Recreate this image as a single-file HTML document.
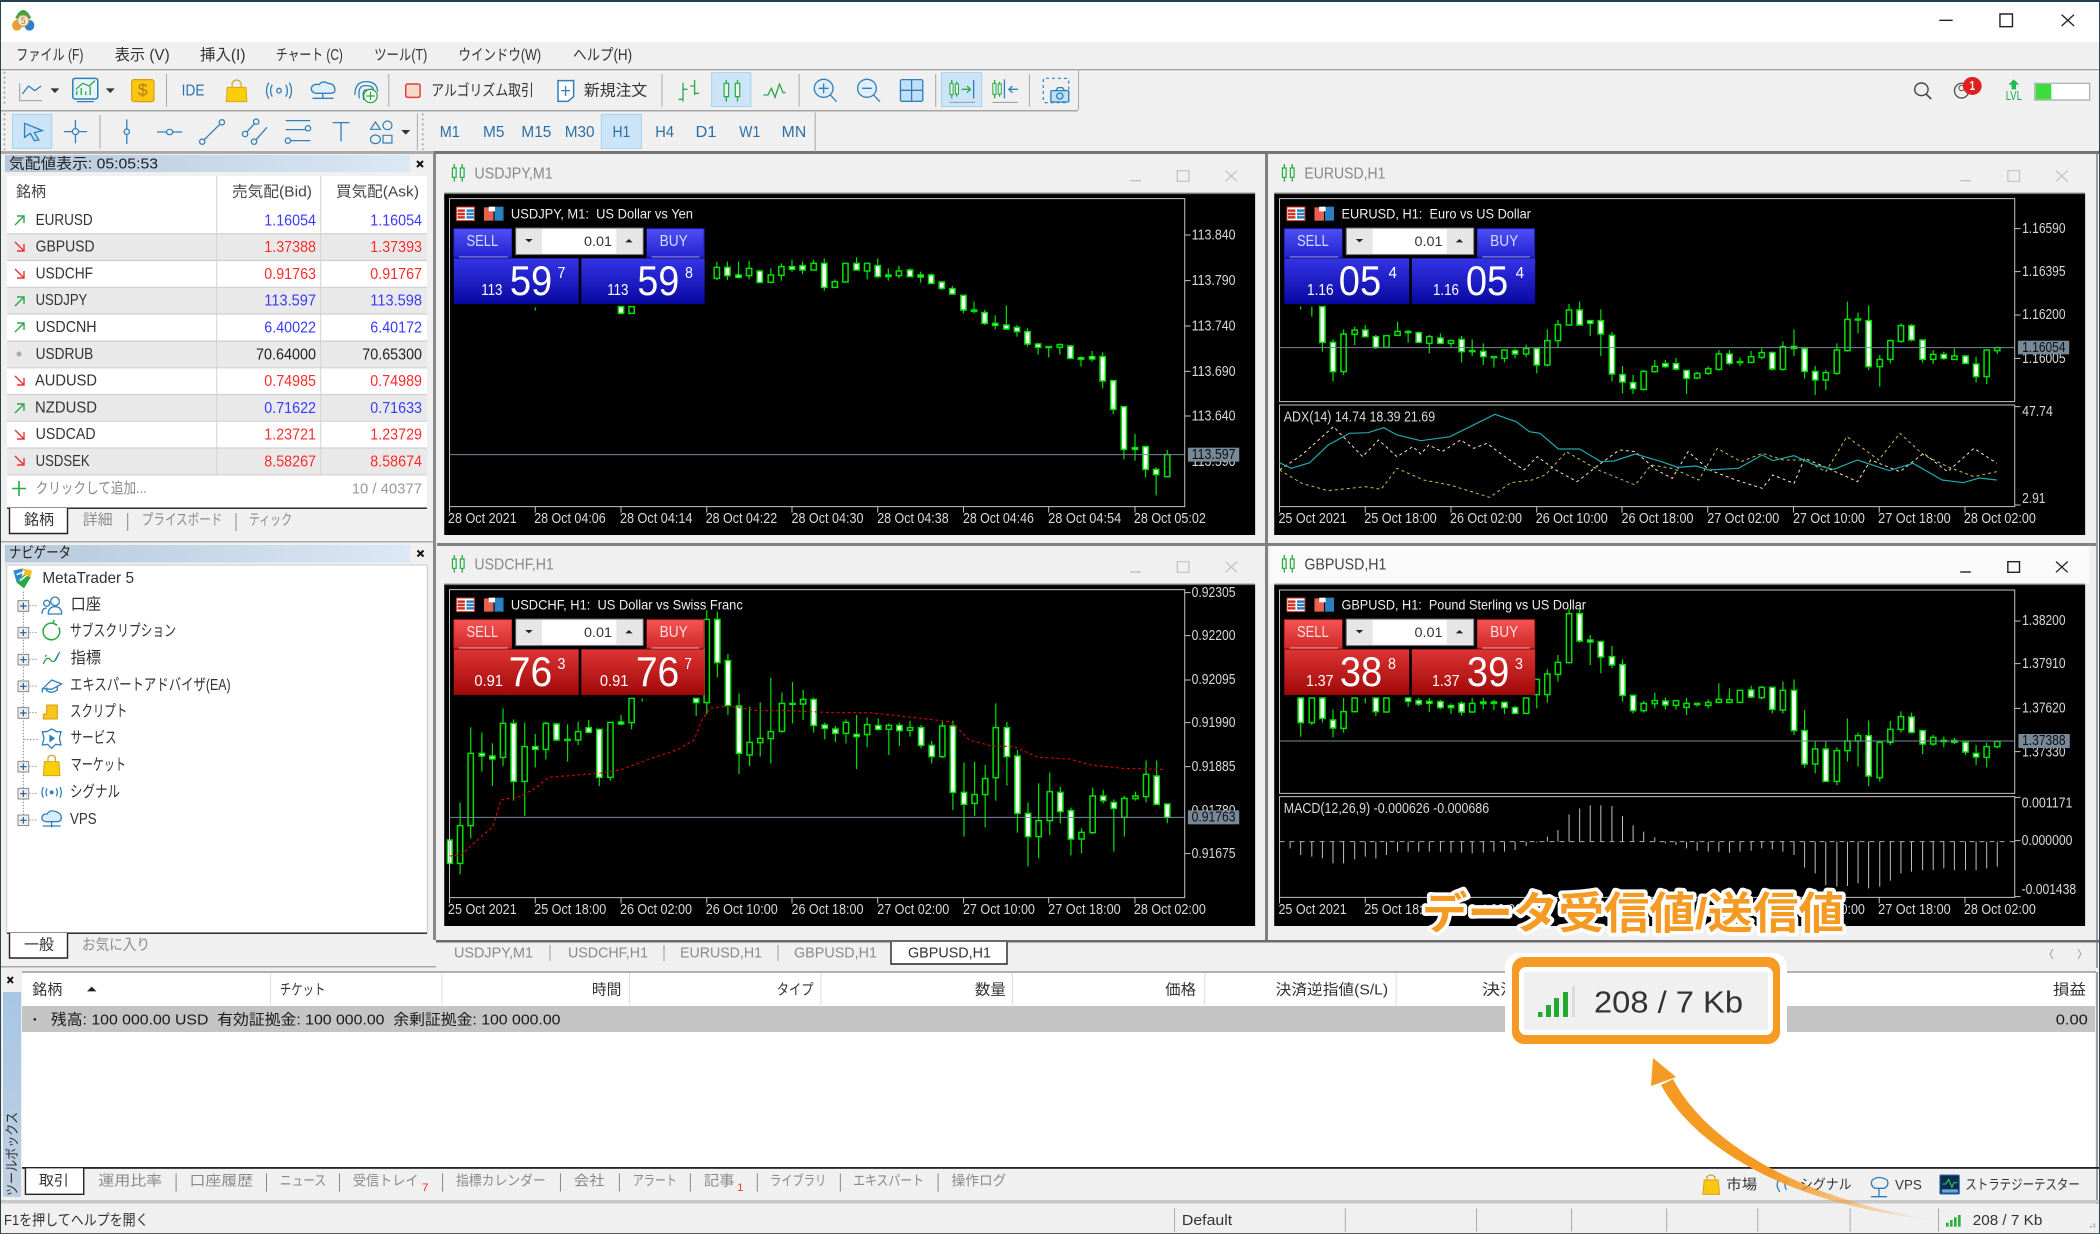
<!DOCTYPE html>
<html lang="ja"><head><meta charset="utf-8"><title>MetaTrader 5</title>
<style>
html,body{margin:0;padding:0;background:#f0f0f0;width:2100px;height:1234px;overflow:hidden}
svg{position:absolute;left:0;top:0;display:block;filter:blur(.35px)}
text{font-family:"Liberation Sans","Noto Sans CJK JP",sans-serif;dominant-baseline:central;white-space:pre}
path,rect,line,circle,ellipse,polyline{vector-effect:non-scaling-stroke}
.b{fill:none;stroke:#2f7fb8;stroke-width:1.3}
.g{fill:none;stroke:#2aa845;stroke-width:1.3}
.w{fill:none;stroke:#00e000;stroke-width:1.2}
.cw{fill:#fff;stroke:#00e000;stroke-width:1.5}
.ch{fill:#000;stroke:#00e000;stroke-width:1.5}
.fr{fill:none;stroke:#c4c4c4;stroke-width:1}
.lb{fill:#d8d8d8}
.sp{stroke:#a8a8a8;stroke-width:1;fill:none}
</style></head><body>
<svg width="2100" height="1234" viewBox="0 0 2100 1234" xmlns="http://www.w3.org/2000/svg">
<defs>
<linearGradient id="bt" x1="0" y1="0" x2="0" y2="1"><stop offset="0" stop-color="#5050f5"/><stop offset="1" stop-color="#2222d0"/></linearGradient>
<linearGradient id="bb" x1="0" y1="0" x2="0" y2="1"><stop offset="0" stop-color="#3434e8"/><stop offset="1" stop-color="#0808a0"/></linearGradient>
<linearGradient id="rt" x1="0" y1="0" x2="0" y2="1"><stop offset="0" stop-color="#f55555"/><stop offset="1" stop-color="#d02828"/></linearGradient>
<linearGradient id="rb" x1="0" y1="0" x2="0" y2="1"><stop offset="0" stop-color="#de3434"/><stop offset="1" stop-color="#a00808"/></linearGradient>
<linearGradient id="tg" x1="0" y1="0" x2="1" y2="0"><stop offset="0" stop-color="#b6c8da"/><stop offset="1" stop-color="#dbe8f5"/></linearGradient>
<linearGradient id="vg" x1="0" y1="0" x2="0" y2="1"><stop offset="0" stop-color="#a6c6e6"/><stop offset="1" stop-color="#c0d0e0"/></linearGradient>
<linearGradient id="ar" gradientUnits="userSpaceOnUse" x1="1770" y1="1170" x2="1934" y2="1220"><stop offset="0" stop-color="#f59a23"/><stop offset="1" stop-color="#f59a23" stop-opacity="0"/></linearGradient>
<g id="lot"><rect x="136" y="228" width="254" height="96" fill="#000"/><rect x="143" y="234" width="241" height="80" fill="#e6e6e6" stroke="#666" stroke-width="1"/><rect x="193" y="237" width="140" height="74" fill="#fff"/><path d="M161 267h14l-7 10zM350 277h14l-7-10z" fill="#222"/><text x="272" y="274" font-size="42" fill="#333" textLength="53" lengthAdjust="spacingAndGlyphs">0.01</text></g>
<g id="pi"><rect x="31" y="171" width="34" height="41" fill="#fff" stroke="#d03020" stroke-width="1"/><path d="M33 182H47M33 192H47M33 202H47" stroke="#d83020" stroke-width="2.5"/><path d="M50 182H64M50 192H64M50 202H64" stroke="#2a80c0" stroke-width="2.5"/><rect x="83" y="172" width="18" height="40" fill="#e86050"/><rect x="103" y="170" width="17" height="42" fill="#2a80c0"/><rect x="92" y="170" width="12" height="14" fill="#fff"/></g>
<g id="pb"><rect x="26" y="236" width="110" height="86" fill="url(#bt)" stroke="#1a1ab0"/><path d="M36 321H128" stroke="#9a9aff" stroke-width="1"/><text x="50" y="275" font-size="46" fill="#d4dcff" textLength="60" lengthAdjust="spacingAndGlyphs">SELL</text><rect x="390" y="236" width="109" height="86" fill="url(#bt)" stroke="#1a1ab0"/><path d="M400 321H490" stroke="#9a9aff" stroke-width="1"/><text x="415" y="275" font-size="46" fill="#d4dcff" textLength="53" lengthAdjust="spacingAndGlyphs">BUY</text><rect x="26" y="325" width="236" height="137" fill="url(#bb)"/><rect x="267" y="325" width="233" height="137" fill="url(#bb)"/><use href="#lot"/></g>
<g id="pr"><rect x="26" y="236" width="110" height="86" fill="url(#rt)" stroke="#b01a1a"/><path d="M36 321H128" stroke="#ffaaaa" stroke-width="1"/><text x="50" y="275" font-size="46" fill="#ffe0e0" textLength="60" lengthAdjust="spacingAndGlyphs">SELL</text><rect x="390" y="236" width="109" height="86" fill="url(#rt)" stroke="#b01a1a"/><path d="M400 321H490" stroke="#ffaaaa" stroke-width="1"/><text x="415" y="275" font-size="46" fill="#ffe0e0" textLength="53" lengthAdjust="spacingAndGlyphs">BUY</text><rect x="26" y="325" width="236" height="137" fill="url(#rb)"/><rect x="267" y="325" width="233" height="137" fill="url(#rb)"/><use href="#lot"/></g>
<g id="wi"><path d="M27 42V95M42 42V95" class="g"/><rect x="23.5" y="54" width="7" height="28" fill="#eaf8ea" stroke="#2aa845" stroke-width="1.2"/><rect x="38.5" y="54" width="7" height="28" fill="#eaf8ea" stroke="#2aa845" stroke-width="1.2"/></g>
</defs>

<!-- base -->
<rect width="2100" height="1234" fill="#f0f0f0"/>
<rect width="2100" height="2" fill="#21404f"/>
<rect y="2" width="2100" height="40" fill="#fff"/>
<rect y="69" width="2100" height="1.5" fill="#a5a5a5"/><rect y="70.5" width="2100" height="1" fill="#fff"/>
<rect y="110" width="1078" height="1.5" fill="#a5a5a5"/>
<rect y="151" width="434" height="3" fill="#aaa"/><rect x="434" y="151" width="1666" height="3" fill="#757575"/>

<!-- top: zoom coords left -->
<g transform="scale(.4464 .3333)">
<path d="M34 54Q52 6 70 54Q52 66 34 54Z" fill="#3aa648"/><ellipse cx="38" cy="76" rx="11" ry="16" fill="#e8a030"/><ellipse cx="66" cy="76" rx="11" ry="16" fill="#2a80d0"/><ellipse cx="52" cy="62" rx="13" ry="17" fill="#f0e8d0" stroke="#c89040"/><text x="47" y="62" font-size="30" fill="#b87820" textLength="10" lengthAdjust="spacingAndGlyphs">5</text>
<g font-size="46" fill="#333">
<text x="36" y="165" textLength="151" lengthAdjust="spacingAndGlyphs">ファイル (F)</text>
<text x="257" y="165" textLength="123" lengthAdjust="spacingAndGlyphs">表示 (V)</text>
<text x="448" y="165" textLength="102" lengthAdjust="spacingAndGlyphs">挿入(I)</text>
<text x="618" y="165" textLength="150" lengthAdjust="spacingAndGlyphs">チャート (C)</text>
<text x="838" y="165" textLength="119" lengthAdjust="spacingAndGlyphs">ツール(T)</text>
<text x="1027" y="165" textLength="185" lengthAdjust="spacingAndGlyphs">ウインドウ(W)</text>
<text x="1284" y="165" textLength="132" lengthAdjust="spacingAndGlyphs">ヘルプ(H)</text>
<text x="966" y="272" textLength="230" lengthAdjust="spacingAndGlyphs">アルゴリズム取引</text>
<text x="1308" y="272" textLength="142" lengthAdjust="spacingAndGlyphs">新規注文</text>
</g>
<path d="M10 215V320M10 340V450M947 340V450" stroke="#b0b0b0" stroke-width="2" stroke-dasharray="2 3" fill="none"/>
<path d="M44 250V302H94" fill="none" stroke="#aaa" stroke-width="1.2"/><path d="M50 282L64 258L78 272L92 258" class="b"/><path d="M113 265h20l-10 14zM237 265h20l-10 14zM899 390h20l-10 14z" fill="#333"/>
<rect x="163" y="235" width="56" height="62" rx="6" fill="#e8f4fb" stroke="#2f7fb8" stroke-width="1.5"/><path d="M172 285V272M182 285V264M192 285V274M202 285V260" class="g"/><path d="M170 268L185 250L200 258L213 242" class="g"/><path d="M172 305H210" class="b"/>
<rect x="295" y="239" width="50" height="66" rx="6" fill="#f7c80f" stroke="#e09a10" stroke-width="1.2"/><text x="309" y="272" font-size="50" fill="#b57a10" textLength="22" lengthAdjust="spacingAndGlyphs">$</text>
<path d="M373 222V320M871 222V320M1483 222V320M224 345V445M935 340V450" class="sp"/>
<text x="407" y="272" font-size="46" fill="#2a70b0" textLength="51" lengthAdjust="spacingAndGlyphs">IDE</text>
<path d="M509 262H551L553 305H507Z" fill="#f9cf0a" stroke="#e0a020" stroke-width="1"/><path d="M520 262V248Q530 232 540 248V262" fill="none" stroke="#d8a020" stroke-width="1.2"/>
<ellipse cx="625" cy="272" rx="5" ry="7" class="b"/><path d="M610 254Q602 272 610 290M640 254Q648 272 640 290M602 248Q592 272 602 296M648 248Q658 272 648 296" class="b"/>
<path d="M707 280Q695 275 698 262Q702 250 715 254Q722 240 735 250Q750 252 750 268Q752 280 738 280Z" fill="#e0f0fb" stroke="#2f7fb8" stroke-width="1.3"/><path d="M723 280V295M700 295H747" class="b"/>
<path d="M795 285Q795 245 820 245Q845 245 846 275M805 295Q800 255 820 257Q838 257 836 272M815 300Q810 268 822 270" class="b"/><ellipse cx="830" cy="288" rx="15" ry="20" fill="#fff" stroke="#2aa845" stroke-width="1.3"/><path d="M830 275V300M820 288H840" class="g"/>
<rect x="909" y="252" width="32" height="40" rx="4" fill="#f8d8c8" stroke="#e04040" stroke-width="1.5"/>
<path d="M1250 242H1285V290L1272 304H1250Z" fill="#fff" stroke="#2f7fb8" stroke-width="1.5"/><path d="M1267 258V288M1257 272H1277" class="b"/>
<path d="M1530 248V305M1520 298H1530M1530 268H1540M1556 240V285M1546 258H1556M1556 280H1566" class="g"/>
<!-- row 2 -->
<rect x="28" y="343" width="88" height="102" fill="#cce4f7" stroke="#a6d2f2" stroke-width="1"/>
<path d="M55 370L95 392L77 398L87 420L77 422L68 400L55 412Z" fill="#bfe0f8" stroke="#2f7fb8" stroke-width="1.3"/>
<path d="M143 395H195M169 360V430M284 358V432M352 396H408M453 425L497 367M549 402L574 365M570 425L598 382M640 362H695M640 389H695M640 422H695M745 368H783M764 368V424" class="b"/>
<g fill="#f0f0f0" stroke="#2f7fb8" stroke-width="1.2"><ellipse cx="169" cy="395" rx="7" ry="9"/><ellipse cx="284" cy="395" rx="6" ry="8"/><ellipse cx="380" cy="396" rx="7" ry="8"/><ellipse cx="453" cy="425" rx="6" ry="8"/><ellipse cx="497" cy="367" rx="6" ry="8"/><ellipse cx="549" cy="402" rx="6" ry="8"/><ellipse cx="574" cy="365" rx="6" ry="8"/><ellipse cx="569" cy="425" rx="6" ry="8"/><ellipse cx="690" cy="385" rx="6" ry="8"/><ellipse cx="645" cy="422" rx="6" ry="8"/><path d="M830 388L841 366L852 388Z"/><ellipse cx="868" cy="376" rx="10" ry="13"/><ellipse cx="841" cy="418" rx="11" ry="13"/><rect x="858" y="406" width="20" height="23"/></g>
<g font-size="46" fill="#2a6fa8">
<text x="985" y="396" textLength="45" lengthAdjust="spacingAndGlyphs">M1</text>
<text x="1082" y="396" textLength="48" lengthAdjust="spacingAndGlyphs">M5</text>
<text x="1168" y="396" textLength="67" lengthAdjust="spacingAndGlyphs">M15</text>
<text x="1265" y="396" textLength="67" lengthAdjust="spacingAndGlyphs">M30</text>
<rect x="1347" y="343" width="90" height="102" fill="#cce4f7" stroke="#a6d2f2" stroke-width="1"/>
<text x="1372" y="396" textLength="40" lengthAdjust="spacingAndGlyphs">H1</text>
<text x="1468" y="396" textLength="42" lengthAdjust="spacingAndGlyphs">H4</text>
</g>
</g>

<g transform="translate(700 0) scale(.4464 .3333)">
<rect x="26" y="218" width="88" height="102" fill="#cce4f7" stroke="#a6d2f2" stroke-width="1"/>
<path d="M59 240V305M84 240V305" class="g"/><rect x="54" y="250" width="10" height="40" fill="#e6f8ea" stroke="#2aa845" stroke-width="1.2"/><rect x="79" y="250" width="10" height="40" fill="#e6f8ea" stroke="#2aa845" stroke-width="1.2"/>
<path d="M142 285H152L160 265L168 292L178 252L186 278H192" class="g"/>
<path d="M222 222V320M528 222V320M738 222V320M848 212V330M258 337V455" class="sp"/>
<ellipse cx="277" cy="265" rx="21" ry="27" fill="#dff0fb" stroke="#2f7fb8" stroke-width="1.3"/><path d="M292 285L306 305M266 265H288M277 250V280" class="b"/>
<ellipse cx="374" cy="265" rx="21" ry="27" fill="#dff0fb" stroke="#2f7fb8" stroke-width="1.3"/><path d="M389 285L403 305M363 265H385" class="b"/>
<rect x="449" y="239" width="50" height="65" rx="4" fill="#bfe0f8" stroke="#2f7fb8" stroke-width="1.3"/><path d="M474 239V304M449 271H499" class="b"/>
<rect x="541" y="218" width="90" height="102" fill="#cce4f7" stroke="#a6d2f2" stroke-width="1"/>
<path d="M564 240V295M575 245V290M660 240V295M671 245V290M586 268H606M598 258L606 268L598 278" class="g"/><rect x="560" y="250" width="7" height="34" fill="#e6f8ea" stroke="#2aa845"/><rect x="572" y="252" width="7" height="30" fill="#e6f8ea" stroke="#2aa845"/><rect x="656" y="250" width="7" height="34" fill="#e6f8ea" stroke="#2aa845"/><rect x="668" y="252" width="7" height="30" fill="#e6f8ea" stroke="#2aa845"/>
<path d="M613 240V295M682 238V295M712 268H692M700 258L692 268L700 278" class="b"/><path d="M559 307H616M655 307H712" stroke="#999" stroke-width="1" fill="none"/>
<rect x="769" y="235" width="57" height="73" rx="6" fill="none" stroke="#2f7fb8" stroke-width="1.2" stroke-dasharray="3 3"/><rect x="786" y="272" width="40" height="34" rx="3" fill="#bfe0f8" stroke="#2f7fb8" stroke-width="1.3"/><path d="M797 272L802 263H812L817 272" class="b"/><ellipse cx="806" cy="288" rx="7" ry="9" class="b"/>
<g font-size="46" fill="#2a6fa8">
<text x="-10" y="396" textLength="47" lengthAdjust="spacingAndGlyphs">D1</text>
<text x="88" y="396" textLength="47" lengthAdjust="spacingAndGlyphs">W1</text>
<text x="183" y="396" textLength="55" lengthAdjust="spacingAndGlyphs">MN</text>
</g>
</g>

<g transform="translate(1400 0) scale(.4464 .3333)">
<path d="M1208 61H1238" stroke="#222" stroke-width="1.4"/><rect x="1344" y="42" width="28" height="38" fill="none" stroke="#222" stroke-width="1.4"/><path d="M1482 44L1510 78M1510 44L1482 78" stroke="#222" stroke-width="1.3"/>
<ellipse cx="1168" cy="268" rx="15" ry="19" fill="none" stroke="#444" stroke-width="1.4"/><path d="M1179 283L1190 297" stroke="#444" stroke-width="1.6"/>
<ellipse cx="1258" cy="272" rx="16" ry="22" fill="none" stroke="#555" stroke-width="1.4"/><ellipse cx="1258" cy="264" rx="6" ry="8" fill="none" stroke="#555"/>
<ellipse cx="1282" cy="258" rx="21" ry="27" fill="#e02020"/><text x="1276" y="258" font-size="40" font-weight="bold" fill="#fff" textLength="12" lengthAdjust="spacingAndGlyphs">1</text>
<path d="M1375 238L1387 254H1380V268H1370V254H1363Z" fill="#1db954"/><text x="1357" y="288" font-size="38" fill="#1aa845" textLength="36" lengthAdjust="spacingAndGlyphs">LVL</text>
<rect x="1422" y="250" width="123" height="50" fill="#fff" stroke="#aaa" stroke-width="1.2"/><rect x="1424" y="252" width="35" height="46" fill="#3ddc3d"/>
</g>

<!-- Market Watch -->
<rect x="5" y="155" width="405" height="17" fill="url(#tg)"/>
<text x="9" y="164" font-size="15" fill="#222" textLength="149" lengthAdjust="spacingAndGlyphs">気配値表示: 05:05:53</text>
<path d="M417 161L423 167M423 161L417 167" stroke="#111" stroke-width="2"/>
<rect x="7" y="176" width="420" height="331" fill="#fff"/>
<g fill="#e9e9e9"><rect x="7" y="234" width="420" height="26.8"/><rect x="7" y="287.6" width="420" height="26.8"/><rect x="7" y="341" width="420" height="26.8"/><rect x="7" y="394.6" width="420" height="26.8"/><rect x="7" y="448" width="420" height="26.8"/></g>
<path d="M7 233.7H427M7 260.5H427M7 287.3H427M7 314H427M7 341H427M7 367.8H427M7 394.5H427M7 421.2H427M7 448H427M7 474.8H427" stroke="#cfcfcf" stroke-width="1.2"/>
<path d="M216.7 176V474M320.7 176V474" stroke="#d4d4d4" stroke-width="1"/>
<g font-size="15" fill="#444">
<text x="16" y="192" textLength="30" lengthAdjust="spacingAndGlyphs">銘柄</text>
<text x="232" y="192" textLength="80" lengthAdjust="spacingAndGlyphs">売気配(Bid)</text>
<text x="336" y="192" textLength="83" lengthAdjust="spacingAndGlyphs">買気配(Ask)</text>
</g>
<g font-size="16" fill="#333">
<text x="35.6" y="220.5" textLength="57" lengthAdjust="spacingAndGlyphs">EURUSD</text>
<text x="35.6" y="247" textLength="59" lengthAdjust="spacingAndGlyphs">GBPUSD</text>
<text x="35.6" y="274" textLength="57.5" lengthAdjust="spacingAndGlyphs">USDCHF</text>
<text x="35.6" y="300.7" textLength="51.7" lengthAdjust="spacingAndGlyphs">USDJPY</text>
<text x="35.6" y="327.5" textLength="61" lengthAdjust="spacingAndGlyphs">USDCNH</text>
<text x="35.6" y="354.3" textLength="57.7" lengthAdjust="spacingAndGlyphs">USDRUB</text>
<text x="35" y="381" textLength="62" lengthAdjust="spacingAndGlyphs">AUDUSD</text>
<text x="35" y="408" textLength="62" lengthAdjust="spacingAndGlyphs">NZDUSD</text>
<text x="35.6" y="434.7" textLength="60" lengthAdjust="spacingAndGlyphs">USDCAD</text>
<text x="35.6" y="461.5" textLength="54" lengthAdjust="spacingAndGlyphs">USDSEK</text>
</g>
<g font-size="15.5" fill="#3a3aff">
<text x="264.3" y="221" textLength="51.7" lengthAdjust="spacingAndGlyphs">1.16054</text><text x="370.3" y="221" textLength="51.7" lengthAdjust="spacingAndGlyphs">1.16054</text>
<text x="264.3" y="301" textLength="51.7" lengthAdjust="spacingAndGlyphs">113.597</text><text x="370.3" y="301" textLength="51.7" lengthAdjust="spacingAndGlyphs">113.598</text>
<text x="264.3" y="328" textLength="51.7" lengthAdjust="spacingAndGlyphs">6.40022</text><text x="370.3" y="328" textLength="51.7" lengthAdjust="spacingAndGlyphs">6.40172</text>
<text x="264.3" y="408.5" textLength="51.7" lengthAdjust="spacingAndGlyphs">0.71622</text><text x="370.3" y="408.5" textLength="51.7" lengthAdjust="spacingAndGlyphs">0.71633</text>
</g>
<g font-size="15.5" fill="#ff2a2a">
<text x="264.3" y="247.5" textLength="51.7" lengthAdjust="spacingAndGlyphs">1.37388</text><text x="370.3" y="247.5" textLength="51.7" lengthAdjust="spacingAndGlyphs">1.37393</text>
<text x="264.3" y="274.5" textLength="51.7" lengthAdjust="spacingAndGlyphs">0.91763</text><text x="370.3" y="274.5" textLength="51.7" lengthAdjust="spacingAndGlyphs">0.91767</text>
<text x="264.3" y="381.5" textLength="51.7" lengthAdjust="spacingAndGlyphs">0.74985</text><text x="370.3" y="381.5" textLength="51.7" lengthAdjust="spacingAndGlyphs">0.74989</text>
<text x="264.3" y="435" textLength="51.7" lengthAdjust="spacingAndGlyphs">1.23721</text><text x="370.3" y="435" textLength="51.7" lengthAdjust="spacingAndGlyphs">1.23729</text>
<text x="264.3" y="462" textLength="51.7" lengthAdjust="spacingAndGlyphs">8.58267</text><text x="370.3" y="462" textLength="51.7" lengthAdjust="spacingAndGlyphs">8.58674</text>
</g>
<text x="256" y="355" font-size="15.5" fill="#222" textLength="60" lengthAdjust="spacingAndGlyphs">70.64000</text><text x="362.3" y="355" font-size="15.5" fill="#222" textLength="59.7" lengthAdjust="spacingAndGlyphs">70.65300</text>
<path d="M15 225L24 216M17 216H24V223M15 306L24 297M17 297H24V304M15 332L24 323M17 323H24V330M15 413L24 404M17 404H24V411" stroke="#2aa845" stroke-width="1.4" fill="none"/>
<path d="M15 242L24 251M24 244V251H17M15 269L24 278M24 271V278H17M15 376L24 385M24 378V385H17M15 430L24 439M24 432V439H17M15 456L24 465M24 458V465H17" stroke="#ef3030" stroke-width="1.4" fill="none"/>
<circle cx="19" cy="354" r="2.5" fill="#aaa"/>
<path d="M12 488.5H26M19 481V496" stroke="#2aa845" stroke-width="1.6"/>
<text x="35.6" y="488.5" font-size="15" fill="#8a8a8a" textLength="111" lengthAdjust="spacingAndGlyphs">クリックして追加...</text>
<text x="351.7" y="489" font-size="15" fill="#9a9a9a" textLength="70.3" lengthAdjust="spacingAndGlyphs">10 / 40377</text>
<rect x="7" y="507.5" width="420" height="1.5" fill="#333"/>
<path d="M9.5 508V533.5H67.5V508" fill="#fff" stroke="#222" stroke-width="1.4"/>
<g font-size="15" fill="#8c8c8c">
<text x="24" y="520" fill="#333" textLength="30" lengthAdjust="spacingAndGlyphs">銘柄</text>
<text x="82.7" y="520" textLength="30" lengthAdjust="spacingAndGlyphs">詳細</text>
<text x="141.7" y="520" textLength="80.6" lengthAdjust="spacingAndGlyphs">プライスボード</text>
<text x="249" y="520" textLength="43" lengthAdjust="spacingAndGlyphs">ティック</text>
</g>
<path d="M127.7 513V531M236 513V531" stroke="#888" stroke-width="1"/>
<rect x="0" y="541" width="433" height="1.5" fill="#a8a8a8"/>

<!-- Navigator -->
<rect x="5" y="545" width="405" height="17.5" fill="url(#tg)"/>
<text x="9" y="553" font-size="15" fill="#222" textLength="62" lengthAdjust="spacingAndGlyphs">ナビゲータ</text>
<path d="M417.5 550.5L423.5 556.5M423.5 550.5L417.5 556.5" stroke="#111" stroke-width="2"/>
<rect x="6.7" y="565" width="420.6" height="367.7" fill="#fff" stroke="#c8c8c8" stroke-width="1"/>
<rect x="7" y="932.5" width="420" height="1.5" fill="#333"/>
<path d="M9.5 933V958H67.5V933" fill="#fff" stroke="#222" stroke-width="1.4"/>
<text x="24" y="945" font-size="15" fill="#333" textLength="30" lengthAdjust="spacingAndGlyphs">一般</text>
<text x="82" y="945" font-size="15" fill="#8c8c8c" textLength="68" lengthAdjust="spacingAndGlyphs">お気に入り</text>
<rect x="0" y="966" width="436" height="1.5" fill="#a8a8a8"/>
<g transform="translate(0 540) scale(.33333)">
<path d="M70 155V840" stroke="#888" stroke-width="1" stroke-dasharray="1.5 1.5"/>
<path d="M88 197H115M88 277H115M88 358H115M88 438H115M88 518H115M72 598H115M88 679H115M88 760H115M88 840H115" stroke="#999" stroke-width="1" stroke-dasharray="1.5 1.5"/>
<g fill="#eee" stroke="#888" stroke-width="1"><rect x="54" y="182" width="32" height="32"/><rect x="54" y="262" width="32" height="32"/><rect x="54" y="343" width="32" height="32"/><rect x="54" y="423" width="32" height="32"/><rect x="54" y="503" width="32" height="32"/><rect x="54" y="664" width="32" height="32"/><rect x="54" y="745" width="32" height="32"/><rect x="54" y="825" width="32" height="32"/></g>
<path d="M60 198H80M70 188V208M60 278H80M70 268V288M60 359H80M70 349V369M60 439H80M70 429V449M60 519H80M70 509V529M60 680H80M70 670V690M60 761H80M70 751V771M60 841H80M70 831V851" stroke="#2a5a90" stroke-width="1.2"/>
<path d="M40 92L68 85L66 110L50 128Z" fill="#2a8ad8"/><path d="M68 85L96 92L92 112L72 104Z" fill="#f0c020"/><path d="M50 128L72 104L92 112L72 145Z" fill="#2aa845"/><path d="M50 104L74 94M60 122L80 106" stroke="#fff" stroke-width="1.5"/>
<g font-size="48" fill="#333">
<text x="127" y="115" textLength="275" lengthAdjust="spacingAndGlyphs">MetaTrader 5</text>
<text x="212" y="195" textLength="91" lengthAdjust="spacingAndGlyphs">口座</text>
<text x="210" y="275" textLength="318" lengthAdjust="spacingAndGlyphs">サブスクリプション</text>
<text x="212" y="355" textLength="91" lengthAdjust="spacingAndGlyphs">指標</text>
<text x="210" y="436" textLength="482" lengthAdjust="spacingAndGlyphs">エキスパートアドバイザ(EA)</text>
<text x="210" y="516" textLength="172" lengthAdjust="spacingAndGlyphs">スクリプト</text>
<text x="212" y="596" textLength="138" lengthAdjust="spacingAndGlyphs">サービス</text>
<text x="212" y="677" textLength="166" lengthAdjust="spacingAndGlyphs">マーケット</text>
<text x="210" y="757" textLength="150" lengthAdjust="spacingAndGlyphs">シグナル</text>
<text x="210" y="838" textLength="80" lengthAdjust="spacingAndGlyphs">VPS</text>
</g>
<g class="b" style="stroke-width:1.3">
<circle cx="165" cy="184" r="13"/><circle cx="140" cy="190" r="9"/><path d="M145 222Q145 200 165 200Q185 200 185 222ZM126 222Q126 204 140 204"/>
<path d="M128 446L155 420L185 432L155 448ZM140 442V452Q155 462 172 450V438M127 446V458"/>
<path d="M155 567L170 575L183 575L178 595L183 615L167 613L155 625L143 613L127 615L132 595L127 575L140 575Z"/><path d="M150 587L162 595L150 604Z" fill="#2f7fb8"/>
<ellipse cx="155" cy="757" rx="4" ry="4" fill="#2f7fb8"/><path d="M141 745Q135 757 141 769M169 745Q175 757 169 769M130 741Q122 757 130 773M180 741Q188 757 180 773"/>
<path d="M137 845Q124 843 126 830Q130 820 141 822Q150 808 168 815Q184 820 184 833Q184 845 172 845Z" fill="#d8ecfa"/><path d="M155 845V862M128 858H182"/>
</g>
<path d="M176 262A25 25 0 1 1 160 250M162 240L160 250L172 256" class="g" style="stroke-width:1.5"/>
<path d="M130 372Q140 345 152 360T175 342" class="g"/><path d="M135 350L140 345M165 360L180 335" stroke="#2f7fb8" stroke-width="1.2" fill="none"/>
<path d="M140 495H172V537H130V522H140Z" fill="#f5c518" stroke="#d89b12" stroke-width="1"/>
<path d="M133 665H177L180 707H130Z" fill="#f9cf0a" stroke="#e0a020" stroke-width="1"/><path d="M144 665V652Q155 640 166 652V665" fill="none" stroke="#d8a020" stroke-width="1.2"/>
</g>

<!-- dividers -->
<rect x="433" y="154" width="3" height="786" fill="#8a8a8a"/>
<rect x="436" y="154" width="1664" height="788" fill="#f0f0f0"/>
<rect x="437" y="543" width="1660" height="3" fill="#808080"/>
<rect x="1265" y="154" width="3" height="786" fill="#808080"/>
<rect x="2096" y="154" width="2" height="1050" fill="#a0a0a0"/>
<rect y="940" x="436" width="1664" height="2.5" fill="#6a6a6a"/>

<!-- Chart 1 USDJPY -->
<g transform="translate(440 150) scale(.5293 .33333)">
<rect x="8" y="130" width="1532" height="1025" fill="#000"/><path d="M8 130H1540" stroke="#777" stroke-width="1.5"/>
<use href="#wi"/>
<text x="65" y="72" font-size="46" fill="#888" textLength="148" lengthAdjust="spacingAndGlyphs">USDJPY,M1</text>
<path d="M1304 92H1324" stroke="#c0c0c0" stroke-width="1.4"/><rect x="1393" y="62" width="22" height="32" fill="none" stroke="#c0c0c0" stroke-width="1.2"/><path d="M1484 62L1506 94M1506 62L1484 94" stroke="#c0c0c0" stroke-width="1.2"/>
<path class="w" d="M180 472V482M342 470V490M362 470V490M523 335V390M543 335V390M564 335V385M584 333V388M604 360V400M625 355V398M645 340V392M665 330V365M685 335V372M706 330V362M726 325V422M746 388V414M766 338V398M787 322V362M807 338V388M827 325V384M847 355V392M867 347V385M888 355V382M908 365V398M928 370V403M948 394V420M968 408V435M989 434V490M1009 455V490M1029 480V525M1049 496V538M1070 466V540M1090 525V560M1110 535V590M1130 578V614M1150 590V622M1171 580V614M1191 585V628M1211 620V650M1232 603V635M1252 607V715M1272 692V792M1292 770V928M1313 852V932M1333 888V982M1353 952V1036M1374 900V982"/>
<path class="cw" d="M337 470h10v20h-10zM538 352h10v25h-10zM559 375h10v7h-10zM599 363h10v34h-10zM660 350h10v8h-10zM680 347h10v13h-10zM721 340h10v72h-10zM782 340h10v20h-10zM822 347h10v33h-10zM842 375h10v5h-10zM883 360h10v20h-10zM903 375h10v6h-10zM923 375h10v25h-10zM943 396h10v19h-10zM963 416h10v16h-10zM984 436h10v44h-10zM1004 480h10v4h-10zM1024 488h10v32h-10zM1044 520h10v6h-10zM1065 525h10v12h-10zM1085 532h10v13h-10zM1105 545h10v37h-10zM1125 582h10v10h-10zM1145 590h10v3h-10zM1186 588h10v37h-10zM1206 623h10v5h-10zM1227 620h10v7h-10zM1247 620h10v73h-10zM1267 692h10v86h-10zM1287 770h10v128h-10zM1308 893h10v5h-10zM1328 890h10v68h-10zM1348 958h10v16h-10z"/>
<path class="ch" d="M357 470h10v20h-10zM518 352h10v33h-10zM579 355h10v22h-10zM620 375h10v22h-10zM640 350h10v26h-10zM701 340h10v20h-10zM741 395h10v17h-10zM761 340h10v56h-10zM802 340h10v23h-10zM862 363h10v14h-10zM1166 584h10v8h-10zM1369 914h10v66h-10z"/>
<rect x="18" y="146" width="1389" height="924" class="fr"/>
<path d="M18 914H1407" stroke="#778899" stroke-width="1"/>
<path class="fr" d="M1407 255H1418M1407 392H1418M1407 528H1418M1407 664H1418M1407 798H1418M18 1070V1088M180 1070V1088M342 1070V1088M504 1070V1088M665 1070V1088M827 1070V1088M989 1070V1088M1150 1070V1088M1313 1070V1088"/>
<g font-size="43" class="lb">
<text x="1420" y="256" textLength="83" lengthAdjust="spacingAndGlyphs">113.840</text>
<text x="1420" y="393" textLength="83" lengthAdjust="spacingAndGlyphs">113.790</text>
<text x="1420" y="529" textLength="83" lengthAdjust="spacingAndGlyphs">113.740</text>
<text x="1420" y="665" textLength="83" lengthAdjust="spacingAndGlyphs">113.690</text>
<text x="1420" y="799" textLength="83" lengthAdjust="spacingAndGlyphs">113.640</text>
<text x="1420" y="936" textLength="83" lengthAdjust="spacingAndGlyphs">113.590</text>
<text x="15" y="1107" textLength="130" lengthAdjust="spacingAndGlyphs">28 Oct 2021</text>
<text x="178" y="1107" textLength="135" lengthAdjust="spacingAndGlyphs">28 Oct 04:06</text>
<text x="340" y="1107" textLength="137" lengthAdjust="spacingAndGlyphs">28 Oct 04:14</text>
<text x="502" y="1107" textLength="135" lengthAdjust="spacingAndGlyphs">28 Oct 04:22</text>
<text x="664" y="1107" textLength="136" lengthAdjust="spacingAndGlyphs">28 Oct 04:30</text>
<text x="826" y="1107" textLength="135" lengthAdjust="spacingAndGlyphs">28 Oct 04:38</text>
<text x="988" y="1107" textLength="134" lengthAdjust="spacingAndGlyphs">28 Oct 04:46</text>
<text x="1149" y="1107" textLength="138" lengthAdjust="spacingAndGlyphs">28 Oct 04:54</text>
<text x="1311" y="1107" textLength="136" lengthAdjust="spacingAndGlyphs">28 Oct 05:02</text>
</g>
<rect x="1413" y="893" width="97" height="42" fill="#778899"/><text x="1420" y="914" font-size="43" fill="#111" textLength="83" lengthAdjust="spacingAndGlyphs">113.597</text>
<use href="#pi"/><text x="134" y="191" font-size="42" fill="#eee" textLength="344" lengthAdjust="spacingAndGlyphs">USDJPY, M1:  US Dollar vs Yen</text>
<use href="#pb"/>
<g fill="#fff">
<text x="78" y="422" font-size="46" textLength="40" lengthAdjust="spacingAndGlyphs">113</text><text x="132" y="392" font-size="126" textLength="80" lengthAdjust="spacingAndGlyphs">59</text><text x="222" y="370" font-size="46" textLength="15" lengthAdjust="spacingAndGlyphs">7</text>
<text x="316" y="422" font-size="46" textLength="40" lengthAdjust="spacingAndGlyphs">113</text><text x="373" y="392" font-size="126" textLength="79" lengthAdjust="spacingAndGlyphs">59</text><text x="463" y="370" font-size="46" textLength="15" lengthAdjust="spacingAndGlyphs">8</text>
</g>
</g>

<!-- Chart 2 EURUSD -->
<g transform="translate(1270 150) scale(.5293 .33333)">
<rect x="8" y="130" width="1532" height="1025" fill="#000"/><path d="M8 130H1540" stroke="#777" stroke-width="1.5"/>
<use href="#wi"/>
<text x="65" y="72" font-size="46" fill="#888" textLength="153" lengthAdjust="spacingAndGlyphs">EURUSD,H1</text>
<path d="M1304 92H1324" stroke="#c0c0c0" stroke-width="1.4"/><rect x="1394" y="62" width="22" height="32" fill="none" stroke="#c0c0c0" stroke-width="1.2"/><path d="M1485 62L1507 94M1507 62L1485 94" stroke="#c0c0c0" stroke-width="1.2"/>
<path class="w" d="M58 470V478M79 470V500M99 470V605M119 568V695M139 538V675M160 530V585M180 525V563M200 555V597M220 557V592M241 515V556M261 540V578M281 545V578M301 555V610M322 550V582M342 568V592M362 558V637M382 568V618M403 580V645M423 620V652M443 598V637M463 596V625M484 584V622M504 592V670M524 538V650M544 510V592M565 462V526M585 455V526M605 510V558M625 478V618M646 546V695M666 648V730M686 675V732M706 660V722M727 630V668M747 630V655M767 624V661M787 660V732M807 665V688M828 650V675M848 600V662M868 600V646M888 622V648M909 603V640M929 595V628M949 604V662M969 574V662M990 538V618M1010 590V686M1030 648V735M1050 660V720M1071 580V675M1091 455V605M1111 488V550M1131 466V660M1152 615V710M1172 568V640M1192 520V578M1212 522V574M1233 568V638M1253 600V642M1273 605V630M1293 595V630M1314 615V642M1334 620V698M1354 598V702M1374 590V612"/>
<path class="cw" d="M94 470h10v107h-10zM114 577h10v88h-10zM175 540h10v20h-10zM195 560h10v32h-10zM256 544h10v4h-10zM276 548h10v29h-10zM317 564h10v16h-10zM357 568h10v37h-10zM377 602h10v3h-10zM398 604h10v16h-10zM418 620h10v3h-10zM458 602h10v10h-10zM499 596h10v49h-10zM580 480h10v45h-10zM600 512h10v8h-10zM620 512h10v40h-10zM641 556h10v116h-10zM661 674h10v22h-10zM681 698h10v18h-10zM742 641h10v9h-10zM762 641h10v16h-10zM782 661h10v24h-10zM863 612h10v28h-10zM883 635h10v3h-10zM944 608h10v49h-10zM985 589h10v7h-10zM1005 596h10v68h-10zM1025 664h10v26h-10zM1106 507h10v3h-10zM1126 512h10v138h-10zM1207 527h10v43h-10zM1228 570h10v58h-10zM1268 613h10v12h-10zM1309 618h10v22h-10zM1329 642h10v38h-10z"/>
<path class="ch" d="M155 540h10v13h-10zM134 552h10v113h-10zM215 557h10v35h-10zM236 544h10v12h-10zM296 560h10v20h-10zM337 572h10v8h-10zM438 600h10v25h-10zM479 596h10v16h-10zM519 572h10v73h-10zM539 524h10v48h-10zM560 480h10v45h-10zM701 664h10v54h-10zM722 649h10v16h-10zM802 670h10v14h-10zM823 656h10v14h-10zM843 612h10v46h-10zM904 620h10v17h-10zM924 608h10v14h-10zM964 590h10v68h-10zM1045 668h10v22h-10zM1066 600h10v70h-10zM1086 508h10v94h-10zM1147 628h10v22h-10zM1167 572h10v56h-10zM1187 527h10v47h-10zM1248 613h10v15h-10zM1288 618h10v10h-10zM1349 600h10v80h-10zM1369 593h10v9h-10z"/>
<rect x="18" y="146" width="1389" height="609" class="fr"/><rect x="18" y="765" width="1389" height="305" class="fr"/>
<path d="M18 593H1407" stroke="#778899" stroke-width="1"/>
<polyline fill="none" stroke="#ffe0c0" stroke-width="1" stroke-dasharray="3 3" points="18,960 60,915 120,830 175,920 205,870 240,920 270,890 285,912 300,885 325,905 360,870 385,895 410,880 435,910 480,960 505,920 540,960 580,995 625,940 660,900 690,905 730,960 760,985 790,905 830,960 880,990 930,1015 950,975 990,1000 1010,925 1040,945 1110,995 1135,930 1190,965 1235,910 1280,965 1330,895 1373,940"/>
<polyline fill="none" stroke="#c0c050" stroke-width="1" stroke-dasharray="3 3" points="18,960 60,1000 110,1022 180,1010 210,1018 240,955 290,990 340,1005 415,1042 455,998 495,990 520,975 560,905 620,960 690,1005 720,945 760,955 810,990 845,895 890,935 930,910 970,930 1010,930 1050,965 1090,860 1150,930 1190,850 1235,915 1280,950 1330,980 1373,965"/>
<polyline fill="none" stroke="#20a8b0" stroke-width="1.2" points="18,938 40,955 75,938 110,885 150,850 185,848 215,833 240,855 285,872 340,860 425,793 465,815 490,845 510,850 545,897 585,897 625,935 650,933 690,912 740,935 770,952 805,948 830,960 885,955 930,915 950,932 990,917 1030,945 1065,958 1110,930 1170,962 1215,940 1270,990 1310,998 1340,984 1373,990"/>
<path class="fr" d="M1407 236H1418M1407 365H1418M1407 495H1418M1407 625H1418M1407 770H1418M1407 1065H1418M18 1070V1088M180 1070V1088M342 1070V1088M504 1070V1088M665 1070V1088M827 1070V1088M989 1070V1088M1151 1070V1088M1313 1070V1088"/>
<g font-size="43" class="lb">
<text x="1421" y="236" textLength="82" lengthAdjust="spacingAndGlyphs">1.16590</text>
<text x="1421" y="365" textLength="82" lengthAdjust="spacingAndGlyphs">1.16395</text>
<text x="1421" y="495" textLength="82" lengthAdjust="spacingAndGlyphs">1.16200</text>
<text x="1421" y="627" textLength="82" lengthAdjust="spacingAndGlyphs">1.16005</text>
<text x="1421" y="786" textLength="58" lengthAdjust="spacingAndGlyphs">47.74</text>
<text x="1421" y="1047" textLength="44" lengthAdjust="spacingAndGlyphs">2.91</text>
<text x="26" y="802" textLength="286" lengthAdjust="spacingAndGlyphs">ADX(14) 14.74 18.39 21.69</text>
<text x="16" y="1107" textLength="129" lengthAdjust="spacingAndGlyphs">25 Oct 2021</text>
<text x="178" y="1107" textLength="137" lengthAdjust="spacingAndGlyphs">25 Oct 18:00</text>
<text x="340" y="1107" textLength="136" lengthAdjust="spacingAndGlyphs">26 Oct 02:00</text>
<text x="502" y="1107" textLength="136" lengthAdjust="spacingAndGlyphs">26 Oct 10:00</text>
<text x="664" y="1107" textLength="136" lengthAdjust="spacingAndGlyphs">26 Oct 18:00</text>
<text x="826" y="1107" textLength="136" lengthAdjust="spacingAndGlyphs">27 Oct 02:00</text>
<text x="988" y="1107" textLength="136" lengthAdjust="spacingAndGlyphs">27 Oct 10:00</text>
<text x="1149" y="1107" textLength="137" lengthAdjust="spacingAndGlyphs">27 Oct 18:00</text>
<text x="1311" y="1107" textLength="136" lengthAdjust="spacingAndGlyphs">28 Oct 02:00</text>
</g>
<rect x="1413" y="572" width="97" height="41" fill="#778899"/><text x="1421" y="593" font-size="43" fill="#111" textLength="82" lengthAdjust="spacingAndGlyphs">1.16054</text>
<use href="#pi" x="1"/><text x="135" y="191" font-size="42" fill="#eee" textLength="358" lengthAdjust="spacingAndGlyphs">EURUSD, H1:  Euro vs US Dollar</text>
<use href="#pb" x="1"/>
<g fill="#fff">
<text x="70" y="422" font-size="46" textLength="50" lengthAdjust="spacingAndGlyphs">1.16</text><text x="130" y="392" font-size="126" textLength="80" lengthAdjust="spacingAndGlyphs">05</text><text x="224" y="370" font-size="46" textLength="16" lengthAdjust="spacingAndGlyphs">4</text>
<text x="308" y="422" font-size="46" textLength="49" lengthAdjust="spacingAndGlyphs">1.16</text><text x="370" y="392" font-size="126" textLength="80" lengthAdjust="spacingAndGlyphs">05</text><text x="464" y="370" font-size="46" textLength="16" lengthAdjust="spacingAndGlyphs">4</text>
</g>
</g>

<!-- Chart 3 USDCHF -->
<g transform="translate(440 540) scale(.5293 .33333)">
<rect x="8" y="133" width="1532" height="1025" fill="#000"/><path d="M8 133H1540" stroke="#777" stroke-width="1.5"/>
<use href="#wi" y="3"/>
<text x="65" y="75" font-size="46" fill="#888" textLength="150" lengthAdjust="spacingAndGlyphs">USDCHF,H1</text>
<path d="M1304 96H1324" stroke="#c0c0c0" stroke-width="1.4"/><rect x="1393" y="65" width="22" height="32" fill="none" stroke="#c0c0c0" stroke-width="1.2"/><path d="M1484 65L1506 97M1506 65L1484 97" stroke="#c0c0c0" stroke-width="1.2"/>
<path class="w" d="M38 788V1003M58 562V895M79 578V695M99 610V738M119 505V678M139 538V782M160 548V828M180 582V682M200 545V658M220 548V604M241 553V665M261 545V615M281 540V580M301 565V738M322 546V722M342 525V556M362 475V568M382 475V485M484 475V528M504 210V522M524 215V412M544 342V525M565 460V702M585 500V678M605 487V650M625 413V670M646 458V578M666 426V550M686 450V540M706 473V578M727 548V598M747 558V606M767 538V610M787 525V687M807 532V622M828 535V572M848 550V645M868 548V618M888 542V590M909 555V625M929 603V670M949 545V654M969 542V810M990 668V890M1010 665V828M1030 675V862M1050 490V782M1071 546V737M1091 630V878M1111 788V980M1131 730V955M1152 698V885M1172 740V850M1192 803V946M1212 865V940M1233 743V882M1253 750V790M1273 778V935M1293 768V890M1314 755V782M1334 662V787M1354 662V795M1374 790V850"/>
<path class="cw" d="M14 900h9v70h-9zM74 640h10v8h-10zM94 648h10v9h-10zM134 550h10v174h-10zM175 620h10v8h-10zM215 552h10v48h-10zM236 598h10v3h-10zM276 563h10v14h-10zM296 568h10v144h-10zM337 546h10v6h-10zM479 475h10v13h-10zM519 238h10v130h-10zM539 362h10v135h-10zM560 498h10v142h-10zM661 490h10v3h-10zM701 478h10v78h-10zM722 555h10v10h-10zM742 567h10v13h-10zM782 583h10v7h-10zM823 557h10v11h-10zM863 556h10v16h-10zM904 563h10v53h-10zM924 616h10v34h-10zM964 558h10v199h-10zM985 757h10v36h-10zM1066 563h10v87h-10zM1086 648h10v172h-10zM1106 820h10v70h-10zM1167 757h10v58h-10zM1187 812h10v85h-10zM1248 768h10v14h-10zM1268 787h10v18h-10zM1349 708h10v85h-10zM1369 792h10v40h-10z"/>
<path class="ch" d="M33 857h10v113h-10zM53 640h10v217h-10zM114 550h10v102h-10zM155 620h10v104h-10zM195 550h10v78h-10zM256 575h10v25h-10zM317 547h10v165h-10zM357 475h10v73h-10zM499 238h10v250h-10zM580 607h10v38h-10zM600 595h10v13h-10zM620 575h10v21h-10zM641 490h10v84h-10zM681 478h10v14h-10zM762 547h10v33h-10zM802 554h10v30h-10zM843 556h10v12h-10zM883 563h10v8h-10zM944 558h10v92h-10zM1005 764h10v26h-10zM1025 716h10v48h-10zM1045 563h10v150h-10zM1126 842h10v48h-10zM1147 755h10v87h-10zM1207 877h10v20h-10zM1228 768h10v110h-10zM1288 775h10v57h-10zM1309 768h10v8h-10zM1329 703h10v67h-10z"/>
<rect x="18" y="149" width="1389" height="924" class="fr"/>
<path d="M18 832H1407" stroke="#778899" stroke-width="1"/>
<polyline fill="none" stroke="#d80000" stroke-width="1.1" stroke-dasharray="3 2.5" points="18,948 40,945 60,915 100,860 115,780 150,770 180,745 205,712 260,705 300,700 340,690 400,655 450,628 480,600 495,540 510,505 545,498 600,512 660,512 740,518 810,518 880,530 965,545 1000,600 1040,617 1085,620 1130,652 1190,657 1230,675 1290,685 1365,688"/>
<path class="fr" d="M1407 158H1418M1407 287H1418M1407 420H1418M1407 548H1418M1407 680H1418M1407 941H1418M18 1073V1090M180 1073V1090M342 1073V1090M504 1073V1090M665 1073V1090M827 1073V1090M989 1073V1090M1150 1073V1090M1313 1073V1090"/>
<g font-size="43" class="lb">
<text x="1420" y="158" textLength="83" lengthAdjust="spacingAndGlyphs">0.92305</text>
<text x="1420" y="287" textLength="83" lengthAdjust="spacingAndGlyphs">0.92200</text>
<text x="1420" y="420" textLength="83" lengthAdjust="spacingAndGlyphs">0.92095</text>
<text x="1420" y="548" textLength="83" lengthAdjust="spacingAndGlyphs">0.91990</text>
<text x="1420" y="680" textLength="83" lengthAdjust="spacingAndGlyphs">0.91885</text>
<text x="1420" y="812" textLength="83" lengthAdjust="spacingAndGlyphs">0.91780</text>
<text x="1420" y="941" textLength="83" lengthAdjust="spacingAndGlyphs">0.91675</text>
<text x="15" y="1110" textLength="130" lengthAdjust="spacingAndGlyphs">25 Oct 2021</text>
<text x="178" y="1110" textLength="136" lengthAdjust="spacingAndGlyphs">25 Oct 18:00</text>
<text x="340" y="1110" textLength="136" lengthAdjust="spacingAndGlyphs">26 Oct 02:00</text>
<text x="502" y="1110" textLength="136" lengthAdjust="spacingAndGlyphs">26 Oct 10:00</text>
<text x="664" y="1110" textLength="136" lengthAdjust="spacingAndGlyphs">26 Oct 18:00</text>
<text x="826" y="1110" textLength="136" lengthAdjust="spacingAndGlyphs">27 Oct 02:00</text>
<text x="988" y="1110" textLength="136" lengthAdjust="spacingAndGlyphs">27 Oct 10:00</text>
<text x="1149" y="1110" textLength="137" lengthAdjust="spacingAndGlyphs">27 Oct 18:00</text>
<text x="1311" y="1110" textLength="136" lengthAdjust="spacingAndGlyphs">28 Oct 02:00</text>
</g>
<rect x="1413" y="811" width="97" height="42" fill="#778899"/><text x="1420" y="832" font-size="43" fill="#111" textLength="83" lengthAdjust="spacingAndGlyphs">0.91763</text>
<use href="#pi" y="3"/><text x="134" y="194" font-size="42" fill="#eee" textLength="438" lengthAdjust="spacingAndGlyphs">USDCHF, H1:  US Dollar vs Swiss Franc</text>
<use href="#pr" y="3"/>
<g fill="#fff">
<text x="65" y="425" font-size="46" textLength="54" lengthAdjust="spacingAndGlyphs">0.91</text><text x="130" y="395" font-size="126" textLength="82" lengthAdjust="spacingAndGlyphs">76</text><text x="222" y="373" font-size="46" textLength="15" lengthAdjust="spacingAndGlyphs">3</text>
<text x="302" y="425" font-size="46" textLength="54" lengthAdjust="spacingAndGlyphs">0.91</text><text x="370" y="395" font-size="126" textLength="82" lengthAdjust="spacingAndGlyphs">76</text><text x="462" y="373" font-size="46" textLength="14" lengthAdjust="spacingAndGlyphs">7</text>
</g>
</g>

<!-- Chart 4 GBPUSD -->
<g transform="translate(1270 540) scale(.5293 .33333)">
<rect x="0" y="18" width="1548" height="115" fill="#fafafa"/>
<rect x="8" y="133" width="1532" height="1025" fill="#000"/><path d="M8 133H1540" stroke="#777" stroke-width="1.5"/>
<use href="#wi" y="3"/>
<text x="65" y="75" font-size="46" fill="#444" textLength="155" lengthAdjust="spacingAndGlyphs">GBPUSD,H1</text>
<path d="M1304 96H1324" stroke="#222" stroke-width="1.4"/><rect x="1394" y="65" width="22" height="32" fill="none" stroke="#222" stroke-width="1.4"/><path d="M1485 65L1507 97M1507 65L1485 97" stroke="#222" stroke-width="1.3"/>
<path class="w" d="M58 474V590M79 474V555M99 474V548M119 508V592M139 474V578M160 474V518M180 474V490M200 474V528M220 474V518M261 474V500M281 474V498M301 474V516M322 480V508M342 490V522M362 484V527M382 474V518M403 474V508M423 480V510M443 484V522M463 498V522M484 474V523M504 418V505M524 388V488M544 345V425M565 205V370M585 205V308M605 285V375M625 302V400M646 318V385M666 358V485M686 463V520M706 483V518M727 458V505M747 472V508M767 480V508M787 474V525M807 488V500M828 478V505M848 430V490M868 445V490M888 448V490M909 437V475M929 438V478M949 440V520M969 425V520M990 418V585M1010 510V683M1030 605V700M1050 605V726M1071 622V735M1091 535V665M1111 578V680M1131 542V738M1152 604V725M1172 543V615M1192 514V578M1212 518V580M1233 570V642M1253 585V618M1273 590V622M1293 594V612M1314 603V645M1334 615V675M1354 608V682M1374 602V625"/>
<path class="cw" d="M53 474h10v74h-10zM94 474h10v61h-10zM114 540h10v24h-10zM195 474h10v41h-10zM256 474h10v10h-10zM276 482h10v10h-10zM296 484h10v6h-10zM317 485h10v18h-10zM337 497h10v6h-10zM357 490h10v26h-10zM398 486h10v5h-10zM418 486h10v4h-10zM438 487h10v16h-10zM458 503h10v17h-10zM580 221h10v82h-10zM600 300h10v6h-10zM620 305h10v46h-10zM641 350h10v25h-10zM661 374h10v92h-10zM681 466h10v46h-10zM742 483h10v12h-10zM802 490h10v4h-10zM904 450h10v21h-10zM944 442h10v66h-10zM985 451h10v121h-10zM1005 572h10v100h-10zM1045 627h10v97h-10zM1126 587h10v121h-10zM1207 531h10v46h-10zM1228 572h10v40h-10zM1268 601h10v4h-10zM1288 601h10v6h-10zM1309 607h10v29h-10zM1329 640h10v11h-10z"/>
<path class="ch" d="M74 474h10v74h-10zM134 515h10v50h-10zM155 474h10v41h-10zM215 474h10v42h-10zM377 490h10v26h-10zM479 474h10v46h-10zM499 418h10v46h-10zM519 402h10v62h-10zM539 367h10v36h-10zM560 221h10v147h-10zM701 490h10v22h-10zM722 482h10v9h-10zM762 482h10v14h-10zM782 490h10v12h-10zM823 487h10v9h-10zM843 478h10v9h-10zM863 479h10v8h-10zM883 451h10v36h-10zM924 442h10v31h-10zM964 451h10v59h-10zM1025 627h10v45h-10zM1066 632h10v92h-10zM1086 603h10v29h-10zM1106 587h10v16h-10zM1147 607h10v106h-10zM1167 568h10v39h-10zM1187 530h10v38h-10zM1248 592h10v20h-10zM1349 620h10v32h-10zM1369 604h10v16h-10z"/>
<rect x="18" y="150" width="1389" height="610" class="fr"/><rect x="18" y="770" width="1389" height="302" class="fr"/>
<path d="M18 603H1407" stroke="#778899" stroke-width="1"/>
<path fill="none" stroke="#c0c0c0" stroke-width="1" d="M38 905V925M58 905V945M79 905V950M99 905V955M119 905V970M139 905V970M160 905V958M180 905V950M200 905V955M220 905V945M241 905V935M261 905V935M281 905V935M301 905V935M322 905V935M342 905V938M362 905V938M382 905V940M403 905V938M423 905V935M443 905V935M463 905V930M484 905V918M504 905V908M524 905V890M544 905V870M565 905V823M585 905V805M605 905V796M625 905V796M646 905V798M666 905V828M686 905V856M706 905V875M727 905V892M747 905V910M767 905V915M787 905V925M807 905V932M828 905V935M848 905V935M868 905V938M888 905V935M909 905V932M929 905V925M949 905V928M969 905V935M990 905V945M1010 905V983M1030 905V1000M1050 905V1035M1071 905V1040M1091 905V1038M1111 905V1030M1131 905V1045M1152 905V1040M1172 905V1022M1192 905V1000M1212 905V995M1233 905V990M1253 905V990M1273 905V985M1293 905V990M1314 905V990M1334 905V990M1354 905V985M1374 905V980"/>
<path d="M18 905H1407" stroke="#aaa" stroke-width="1" stroke-dasharray="5 5"/>
<path class="fr" d="M1407 243H1418M1407 371H1418M1407 505H1418M1407 635H1418M1407 772H1418M1407 902H1418M1407 1070H1418M18 1072V1090M180 1072V1090M342 1072V1090M504 1072V1090M665 1072V1090M827 1072V1090M989 1072V1090M1151 1072V1090M1313 1072V1090"/>
<g font-size="43" class="lb">
<text x="1421" y="243" textLength="82" lengthAdjust="spacingAndGlyphs">1.38200</text>
<text x="1421" y="371" textLength="82" lengthAdjust="spacingAndGlyphs">1.37910</text>
<text x="1421" y="505" textLength="82" lengthAdjust="spacingAndGlyphs">1.37620</text>
<text x="1421" y="637" textLength="82" lengthAdjust="spacingAndGlyphs">1.37330</text>
<text x="1420" y="790" textLength="96" lengthAdjust="spacingAndGlyphs">0.001171</text>
<text x="1420" y="902" textLength="96" lengthAdjust="spacingAndGlyphs">0.000000</text>
<text x="1420" y="1050" textLength="103" lengthAdjust="spacingAndGlyphs">-0.001438</text>
<text x="26" y="806" textLength="388" lengthAdjust="spacingAndGlyphs">MACD(12,26,9) -0.000626 -0.000686</text>
<text x="16" y="1110" textLength="129" lengthAdjust="spacingAndGlyphs">25 Oct 2021</text>
<text x="178" y="1110" textLength="137" lengthAdjust="spacingAndGlyphs">25 Oct 18:00</text>
<text x="340" y="1110" textLength="136" lengthAdjust="spacingAndGlyphs">26 Oct 02:00</text>
<text x="988" y="1110" textLength="136" lengthAdjust="spacingAndGlyphs">27 Oct 10:00</text>
<text x="1149" y="1110" textLength="137" lengthAdjust="spacingAndGlyphs">27 Oct 18:00</text>
<text x="1311" y="1110" textLength="136" lengthAdjust="spacingAndGlyphs">28 Oct 02:00</text>
</g>
<rect x="1414" y="582" width="97" height="42" fill="#778899"/><text x="1421" y="603" font-size="43" fill="#111" textLength="82" lengthAdjust="spacingAndGlyphs">1.37388</text>
<use href="#pi" x="1" y="3"/><text x="135" y="194" font-size="42" fill="#eee" textLength="462" lengthAdjust="spacingAndGlyphs">GBPUSD, H1:  Pound Sterling vs US Dollar</text>
<use href="#pr" x="1" y="3"/>
<g fill="#fff">
<text x="68" y="425" font-size="46" textLength="52" lengthAdjust="spacingAndGlyphs">1.37</text><text x="132" y="395" font-size="126" textLength="80" lengthAdjust="spacingAndGlyphs">38</text><text x="223" y="373" font-size="46" textLength="15" lengthAdjust="spacingAndGlyphs">8</text>
<text x="306" y="425" font-size="46" textLength="52" lengthAdjust="spacingAndGlyphs">1.37</text><text x="372" y="395" font-size="126" textLength="80" lengthAdjust="spacingAndGlyphs">39</text><text x="463" y="373" font-size="46" textLength="15" lengthAdjust="spacingAndGlyphs">3</text>
</g>
</g>

<!-- chart tabs -->
<rect x="436" y="943" width="1660" height="24" fill="#f0f0f0"/>
<path d="M891 942V964H1007V942" fill="#fff" stroke="#222" stroke-width="1.4"/>
<g font-size="15" fill="#8a8a8a">
<text x="454" y="953" textLength="79" lengthAdjust="spacingAndGlyphs">USDJPY,M1</text>
<text x="568" y="953" textLength="80" lengthAdjust="spacingAndGlyphs">USDCHF,H1</text>
<text x="680" y="953" textLength="82" lengthAdjust="spacingAndGlyphs">EURUSD,H1</text>
<text x="794" y="953" textLength="83" lengthAdjust="spacingAndGlyphs">GBPUSD,H1</text>
<text x="908" y="953" fill="#333" textLength="83" lengthAdjust="spacingAndGlyphs">GBPUSD,H1</text>
</g>
<path d="M550 945V961M664 945V961M778 945V961" stroke="#999" stroke-width="1"/>
<path d="M2053 949L2050 954L2053 959M2078 949L2081 954L2078 959" stroke="#aaa" stroke-width="1.2" fill="none"/>

<!-- Toolbox -->
<rect x="0" y="968" width="2100" height="4" fill="#f0f0f0"/>
<rect x="22" y="971" width="2074" height="2" fill="#b0b0b0"/>
<rect x="22" y="973" width="2073" height="194" fill="#fff"/>
<rect x="22" y="1006" width="2073" height="26" fill="#c4c4c4"/>
<rect x="3" y="992" width="18" height="205" fill="url(#vg)"/>
<path d="M7.5 977L13 983M13 977L7.5 983" stroke="#111" stroke-width="2"/>
<text transform="translate(12 1196) rotate(-90)" font-size="14" fill="#333" textLength="84" lengthAdjust="spacingAndGlyphs">ツールボックス</text>
<rect x="22" y="1167" width="2078" height="1.8" fill="#222"/>
<rect y="1200" width="2100" height="3.5" fill="#c8c8c8"/>
<rect y="1233" width="2100" height="1" fill="#4a5a64"/>
<rect width="1" height="1234" fill="#2b4450"/><rect x="2099" width="1" height="1234" fill="#2b4450"/>

<g transform="translate(0 960) scale(.6696 .33333)">
<path d="M404 40V135M660 40V135M940 40V135M1226 40V135M1512 40V135" stroke="#ddd" stroke-width="1"/>
<g font-size="44" fill="#333">
<text x="48" y="88" textLength="45" lengthAdjust="spacingAndGlyphs">銘柄</text>
<text x="418" y="88" textLength="68" lengthAdjust="spacingAndGlyphs">チケット</text>
<text x="884" y="88" textLength="44" lengthAdjust="spacingAndGlyphs">時間</text>
<text x="1160" y="88" textLength="55" lengthAdjust="spacingAndGlyphs">タイプ</text>
<text x="1456" y="88" textLength="46" lengthAdjust="spacingAndGlyphs">数量</text>
</g>
<path d="M130 94h14l-7-14z" fill="#222"/><ellipse cx="52" cy="178" rx="2" ry="4" fill="#222"/>
<text x="76" y="178" font-size="44" fill="#1a1a1a" textLength="761" lengthAdjust="spacingAndGlyphs">残高: 100 000.00 USD  有効証拠金: 100 000.00  余剰証拠金: 100 000.00</text>
<path d="M38 625V703H125V625" fill="#fff" stroke="#222" stroke-width="1.4"/>
<g font-size="42" fill="#8a8a8a">
<text x="58" y="662" fill="#333" textLength="45" lengthAdjust="spacingAndGlyphs">取引</text>
<text x="147" y="662" textLength="95" lengthAdjust="spacingAndGlyphs">運用比率</text>
<text x="283" y="662" textLength="95" lengthAdjust="spacingAndGlyphs">口座履歴</text>
<text x="418" y="662" textLength="69" lengthAdjust="spacingAndGlyphs">ニュース</text>
<text x="527" y="662" textLength="98" lengthAdjust="spacingAndGlyphs">受信トレイ</text>
<text x="681" y="662" textLength="134" lengthAdjust="spacingAndGlyphs">指標カレンダー</text>
<text x="857" y="662" textLength="46" lengthAdjust="spacingAndGlyphs">会社</text>
<text x="945" y="662" textLength="66" lengthAdjust="spacingAndGlyphs">アラート</text>
<text x="1051" y="662" textLength="46" lengthAdjust="spacingAndGlyphs">記事</text>
<text x="1150" y="662" textLength="84" lengthAdjust="spacingAndGlyphs">ライブラリ</text>
<text x="1274" y="662" textLength="106" lengthAdjust="spacingAndGlyphs">エキスパート</text>
<text x="1421" y="662" textLength="82" lengthAdjust="spacingAndGlyphs">操作ログ</text>
<text x="630" y="683" font-size="32" fill="#ef3030" textLength="10" lengthAdjust="spacingAndGlyphs">7</text>
<text x="1101" y="683" font-size="32" fill="#ef3030" textLength="9" lengthAdjust="spacingAndGlyphs">1</text>
</g>
<path d="M263 640V695M398 640V695M507 640V695M661 640V695M837 640V695M925 640V695M1031 640V695M1131 640V695M1255 640V695M1401 640V695" stroke="#888" stroke-width="1"/>
<text x="6" y="780" font-size="44" fill="#333" textLength="216" lengthAdjust="spacingAndGlyphs">F1を押してヘルプを開く</text>
</g>

<g transform="translate(1050 880) scale(.6696 .33333)">
<path d="M231 280V375M517 280V375" stroke="#ddd" stroke-width="1"/>
<g font-size="44" fill="#333">
<text x="172" y="328" textLength="46" lengthAdjust="spacingAndGlyphs">価格</text>
<text x="337" y="328" textLength="168" lengthAdjust="spacingAndGlyphs">決済逆指値(S/L)</text>
<text x="645" y="328" textLength="170" lengthAdjust="spacingAndGlyphs">決済指値(T/P)</text>
<text x="1498" y="328" textLength="49" lengthAdjust="spacingAndGlyphs">損益</text>
</g>
<text x="1502" y="418" font-size="44" fill="#1a1a1a" textLength="48" lengthAdjust="spacingAndGlyphs">0.00</text>
<path d="M977 900H998L1000 943H975Z" fill="#f7c80f" stroke="#d9a020" stroke-width="1"/><path d="M981 900V890Q987 880 993 890V900" fill="none" stroke="#caa020" stroke-width="1.2"/>
<path d="M1090 895Q1082 915 1090 935M1100 900Q1095 915 1100 930" class="b"/>
<path d="M1232 925Q1224 915 1228 900Q1238 885 1250 900Q1254 915 1246 925ZM1238 925V950M1226 950H1250" class="b"/>
<rect x="1329" y="885" width="29" height="57" rx="2" fill="#0f2a4f" stroke="#2a70b0" stroke-width="1"/><path d="M1333 912L1338 912L1342 898L1347 922L1350 908L1355 908" stroke="#20e050" stroke-width="1" fill="none"/><rect x="1332" y="928" width="24" height="10" fill="#6aa8dc"/>
<g font-size="42" fill="#333">
<text x="1010" y="915" textLength="46" lengthAdjust="spacingAndGlyphs">市場</text>
<text x="1120" y="915" textLength="77" lengthAdjust="spacingAndGlyphs">シグナル</text>
<text x="1262" y="915" textLength="40" lengthAdjust="spacingAndGlyphs">VPS</text>
<text x="1367" y="915" textLength="171" lengthAdjust="spacingAndGlyphs">ストラテジーテスター</text>
</g>
<path d="M186 985V1055M441 985V1055M637 985V1055M779 985V1055M921 985V1055M1057 985V1055M1195 985V1055M1327 985V1055" stroke="#aaa" stroke-width="1"/>
<text x="197" y="1020" font-size="44" fill="#333" textLength="75" lengthAdjust="spacingAndGlyphs">Default</text>
</g>

<!-- Annotation arrow -->
<path d="M1661 1085C1693 1144 1782 1204 1934 1220C1790 1197 1703 1137 1673 1079Z" fill="url(#ar)"/>
<path d="M1653 1058L1651 1086L1676 1077Z" fill="#f59a23"/>
<g transform="translate(1050 880) scale(.6696 .33333)">
<g fill="#2fae3c"><rect x="1338" y="1028" width="4" height="12"/><rect x="1344" y="1020" width="4" height="20"/><rect x="1350" y="1012" width="4" height="28"/><rect x="1356" y="1005" width="4" height="35"/></g>
<text x="1378" y="1020" font-size="44" fill="#333" textLength="104" lengthAdjust="spacingAndGlyphs">208 / 7 Kb</text>
<path d="M1553 1040h3M1558 1033h3M1558 1040h3" stroke="#aaa" stroke-width="1.5"/>
</g>
<rect x="1505" y="953" width="282" height="95" rx="14" fill="#fff"/>
<rect x="1512" y="957" width="268" height="87" rx="12" fill="#f59a23"/>
<rect x="1519" y="967" width="254" height="68" rx="7" fill="#fff"/>
<rect x="1524" y="972" width="244" height="58" fill="#f0f0f0"/>
<g fill="#22aa33"><rect x="1538" y="1012" width="4.5" height="5"/><rect x="1546" y="1005" width="5" height="12"/><rect x="1554" y="998" width="5" height="19"/><rect x="1563" y="992" width="5" height="25"/></g><rect x="1572" y="986" width="3" height="31" fill="#dcdcdc"/>
<text x="1594" y="1002" font-size="31" fill="#333" textLength="149" lengthAdjust="spacingAndGlyphs">208 / 7 Kb</text>
<text x="1422" y="914" font-size="44" font-weight="bold" fill="#f59a23" stroke="#fff" stroke-width="7" stroke-linejoin="round" style="paint-order:stroke" textLength="422" lengthAdjust="spacingAndGlyphs">データ受信値/送信値</text>
</svg>
</body></html>
